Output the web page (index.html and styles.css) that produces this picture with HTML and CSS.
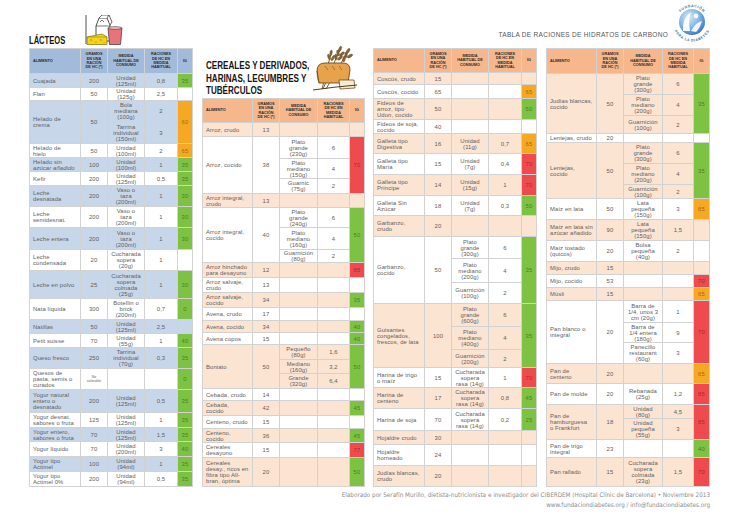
FILE: index.html
```html
<!DOCTYPE html>
<html lang="es">
<head>
<meta charset="utf-8">
<title>Tabla de raciones de hidratos de carbono</title>
<link rel="stylesheet" href="styles.css">
</head>
<body>
<div class="page">
  <div class="cols">
    <section class="col col1">
      <div class="head1">
        <h2 class="sec-title sec-title1">LÁCTEOS</h2>
        <svg class="icon-milk" viewBox="0 0 38 31" aria-hidden="true">
          <line x1="1" y1="0" x2="1" y2="29" stroke="#222" stroke-width="0.8"/>
          <path d="M11 11 L14 3 L22 3 L25 10 L25 26 L11 26 Z" fill="#fff" stroke="#222" stroke-width="0.8"/>
          <path d="M14 3 L17 0 L24 0 L22 3" fill="#fff" stroke="#222" stroke-width="0.7"/>
          <path d="M24 0 L27 7 L25 10" fill="#fff" stroke="#222" stroke-width="0.7"/>
          <line x1="11" y1="11" x2="25" y2="11" stroke="#222" stroke-width="0.6"/>
          <path d="M15 7 L17 5 L19 7" fill="none" stroke="#222" stroke-width="0.6"/>
          <path d="M23 13 L37 13 L35.5 29.5 L24.5 29.5 Z" fill="#e8747b" stroke="#333" stroke-width="0.7"/>
          <ellipse cx="30" cy="13" rx="7" ry="1.4" fill="#f4b3b6" stroke="#333" stroke-width="0.5"/>
          <path d="M2 22 L17 19 L22 22 L22 29.5 L2 29.5 Z" fill="#f3d31b" stroke="#6b5a00" stroke-width="0.6"/>
          <path d="M2 22 L22 22" stroke="#6b5a00" stroke-width="0.4"/>
          <circle cx="6" cy="25" r="1" fill="#c9a800"/>
          <circle cx="11" cy="27" r="0.8" fill="#c9a800"/>
          <circle cx="16" cy="25" r="1" fill="#c9a800"/>
          <circle cx="19" cy="27.5" r="0.7" fill="#c9a800"/>
        </svg>
      </div>
      <table class="tbl blue">
        <colgroup><col class="ca"><col class="cg"><col class="cm"><col class="cr"><col class="ci"></colgroup>
        <thead>
          <tr class="h25"><th class="n">ALIMENTO</th><th>GRAMOS<br>EN UNA<br>RACIÓN<br>DE HC (*)</th><th>MEDIDA<br>HABITUAL DE<br>CONSUMO</th><th>RACIONES<br>DE HC EN<br>MEDIDA<br>HABITUAL</th><th>IG</th></tr>
        </thead>
        <tbody>
          <tr class="a h14"><td class="n">Cuajada</td><td>200</td><td>Unidad<br>(125ml)</td><td>0,8</td><td class="g">35</td></tr>
          <tr class="h13"><td class="n">Flan</td><td>50</td><td>Unidad<br>(125g)</td><td>2,5</td><td></td></tr>
          <tr class="a h21"><td class="n" rowspan="2">Helado de<br>crema</td><td rowspan="2">50</td><td>Bola<br>mediana<br>(100g)</td><td>2</td><td class="o" rowspan="2">60</td></tr>
          <tr class="a h22"><td>Tarrina<br>individual<br>(150ml)</td><td>3</td></tr>
          <tr class="h14"><td class="n">Helado de<br>hielo</td><td>50</td><td>Unidad<br>(100ml)</td><td>2</td><td class="o">65</td></tr>
          <tr class="a h14"><td class="n">Helado sin<br><i>azúcar añadido</i></td><td>100</td><td>Unidad<br>(100ml)</td><td>1</td><td class="g">35</td></tr>
          <tr class="h14"><td class="n">Kefir</td><td>200</td><td>Unidad<br>(125ml)</td><td>0,5</td><td class="g">35</td></tr>
          <tr class="a h21"><td class="n">Leche<br>desnatada</td><td>200</td><td>Vaso o<br>taza<br>(200ml)</td><td>1</td><td class="g">30</td></tr>
          <tr class="h21"><td class="n">Leche<br>semidesnat.</td><td>200</td><td>Vaso o<br>taza<br>(200ml)</td><td>1</td><td class="g">30</td></tr>
          <tr class="a h22"><td class="n">Leche entera</td><td>200</td><td>Vaso o<br>taza<br>(200ml)</td><td>1</td><td class="g">30</td></tr>
          <tr class="h21"><td class="n">Leche<br>condensada</td><td>20</td><td>Cucharada<br>sopera<br>(20g)</td><td>1</td><td></td></tr>
          <tr class="a h28"><td class="n">Leche en polvo</td><td>25</td><td>Cucharada<br>sopera<br>colmada<br>(25g)</td><td>1</td><td class="g">30</td></tr>
          <tr class="h21"><td class="n">Nata líquida</td><td>300</td><td>Botellín o<br>brick<br>(200ml)</td><td>0,7</td><td class="g">0</td></tr>
          <tr class="a h14"><td class="n">Natillas</td><td>50</td><td>Unidad<br>(125ml)</td><td>2,5</td><td></td></tr>
          <tr class="h14"><td class="n">Petit suisse</td><td>70</td><td>Unidad<br>(55g)</td><td>1</td><td class="g">40</td></tr>
          <tr class="a h21"><td class="n">Queso fresco</td><td>250</td><td>Tarrina<br>individual<br>(70g)</td><td>0,3</td><td class="g">35</td></tr>
          <tr class="h21"><td class="n">Quesos de<br>pasta, semis o<br>curados</td><td class="tiny">No<br>valorable</td><td></td><td></td><td class="g">0</td></tr>
          <tr class="a h23"><td class="n">Yogur natural<br>entero o<br>desnatado</td><td>200</td><td>Unidad<br>(125ml)</td><td>0,5</td><td class="g">35</td></tr>
          <tr class="h15"><td class="n">Yogur desnat.<br>sabores o fruta</td><td>125</td><td>Unidad<br>(125ml)</td><td>1</td><td class="g">35</td></tr>
          <tr class="a h14"><td class="n">Yogur entero,<br>sabores o fruta</td><td>70</td><td>Unidad<br>(125ml)</td><td>1,5</td><td class="g">35</td></tr>
          <tr class="h15"><td class="n">Yogur líquido</td><td>70</td><td>Unidad<br>(200ml)</td><td>3</td><td class="g">40</td></tr>
          <tr class="a h15"><td class="n">Yogur tipo<br>Actimel</td><td>100</td><td>Unidad<br>(94ml)</td><td>1</td><td class="g">35</td></tr>
          <tr class="h15"><td class="n">Yogur tipo<br>Actimel 0%</td><td>200</td><td>Unidad<br>(94ml)</td><td>0,5</td><td class="g">35</td></tr>
        </tbody>
      </table>
    </section>

    <section class="col col2">
      <div class="head2">
        <h2 class="sec-title sec-title2">CEREALES Y DERIVADOS,<br>HARINAS, LEGUMBRES Y<br>TUBÉRCULOS</h2>
        <svg class="icon-bread" viewBox="0 0 45 50" aria-hidden="true">
          <g stroke="#6e4d22" stroke-width="0.9" fill="none">
            <path d="M10 46 L27 6"/>
            <path d="M13 46 L35 8"/>
            <path d="M9 46 L18 10"/>
          </g>
          <g fill="#8a6432" stroke="#4a3010" stroke-width="0.3">
            <ellipse cx="27" cy="6" rx="1.3" ry="3" transform="rotate(25 27 6)"/>
            <ellipse cx="25" cy="10" rx="1.3" ry="3" transform="rotate(-10 25 10)"/>
            <ellipse cx="29" cy="11" rx="1.3" ry="3" transform="rotate(50 29 11)"/>
            <ellipse cx="23" cy="14" rx="1.3" ry="3" transform="rotate(-5 23 14)"/>
            <ellipse cx="27" cy="15" rx="1.3" ry="3" transform="rotate(50 27 15)"/>
            <ellipse cx="35" cy="8" rx="1.3" ry="3" transform="rotate(35 35 8)"/>
            <ellipse cx="33" cy="12" rx="1.3" ry="3" transform="rotate(5 33 12)"/>
            <ellipse cx="37" cy="13" rx="1.3" ry="3" transform="rotate(60 37 13)"/>
            <ellipse cx="31" cy="16" rx="1.3" ry="3" transform="rotate(10 31 16)"/>
            <ellipse cx="18" cy="10" rx="1.2" ry="3" transform="rotate(10 18 10)"/>
            <ellipse cx="16" cy="14" rx="1.2" ry="3" transform="rotate(-20 16 14)"/>
            <ellipse cx="20" cy="15" rx="1.2" ry="3" transform="rotate(30 20 15)"/>
          </g>
          <path d="M4 28 Q4 20 12 20 L30 20 Q37 20 37 27 L35 40 L6 40 Z" fill="#e9a24c" stroke="#5a3a10" stroke-width="0.8"/>
          <path d="M4 28 Q4 36 6 40" fill="none" stroke="#5a3a10" stroke-width="0.6"/>
          <g stroke="#8a5a20" stroke-width="0.7">
            <line x1="12" y1="23" x2="15" y2="27"/>
            <line x1="19" y1="23" x2="22" y2="27"/>
            <line x1="26" y1="23" x2="29" y2="27"/>
          </g>
          <path d="M26 37 L41 37 L42 45 L27 46 Z" fill="#f8ecd0" stroke="#5a3a10" stroke-width="0.7"/>
          <path d="M0 47 Q20 44 44 42" fill="none" stroke="#3a2a10" stroke-width="0.9"/>
        </svg>
      </div>
      <table class="tbl peach">
        <colgroup><col class="ca2"><col class="cg"><col class="cm2"><col class="cr2"><col class="ci"></colgroup>
        <thead>
          <tr class="h24"><th class="n">ALIMENTO</th><th>GRAMOS<br>EN UNA<br>RACIÓN<br>DE HC (*)</th><th>MEDIDA<br>HABITUAL DE<br>CONSUMO</th><th>RACIONES<br>DE HC EN<br>MEDIDA<br>HABITUAL</th><th>IG</th></tr>
        </thead>
        <tbody>
          <tr class="a h14"><td class="n">Arroz, crudo</td><td>13</td><td></td><td></td><td></td></tr>
          <tr class="h22"><td class="n" rowspan="3">Arroz, cocido</td><td rowspan="3">38</td><td>Plato<br>grande<br>(230g)</td><td>6</td><td class="r" rowspan="3">70</td></tr>
          <tr class="h20"><td>Plato<br>mediano<br>(150g)</td><td>4</td></tr>
          <tr class="h15"><td>Guarnic<br>(75g)</td><td>2</td></tr>
          <tr class="a h14"><td class="n">Arroz integral,<br>crudo</td><td>13</td><td></td><td></td><td></td></tr>
          <tr class="h20"><td class="n" rowspan="3">Arroz integral,<br>cocido</td><td rowspan="3">40</td><td>Plato<br>grande<br>(240g)</td><td>6</td><td class="g" rowspan="3">50</td></tr>
          <tr class="h22"><td>Plato<br>mediano<br>(160g)</td><td>4</td></tr>
          <tr class="h13"><td>Guarnición<br>(80g)</td><td>2</td></tr>
          <tr class="a h15"><td class="n">Arroz hinchado<br>para desayuno</td><td>12</td><td></td><td></td><td class="r">85</td></tr>
          <tr class="h15"><td class="n">Arroz salvaje,<br>crudo</td><td>13</td><td></td><td></td><td></td></tr>
          <tr class="a h15"><td class="n">Arroz salvaje,<br>cocido</td><td>34</td><td></td><td></td><td class="g">35</td></tr>
          <tr class="h13"><td class="n">Avena, crudo</td><td>17</td><td></td><td></td><td></td></tr>
          <tr class="a h12"><td class="n">Avena, cocido</td><td>34</td><td></td><td></td><td class="g">40</td></tr>
          <tr class="h12"><td class="n">Avena copos</td><td>15</td><td></td><td></td><td class="g">40</td></tr>
          <tr class="a h15"><td class="n" rowspan="3">Boniato</td><td rowspan="3">50</td><td>Pequeño<br>(80g)</td><td>1,6</td><td class="g" rowspan="3">50</td></tr>
          <tr class="a h14"><td>Mediano<br>(160g)</td><td>3,2</td></tr>
          <tr class="a h15"><td>Grande<br>(320g)</td><td>6,4</td></tr>
          <tr class="h12"><td class="n">Cebada, crudo</td><td>14</td><td></td><td></td><td></td></tr>
          <tr class="a h15"><td class="n">Cebada,<br>cocido</td><td>42</td><td></td><td></td><td class="g">45</td></tr>
          <tr class="h13"><td class="n">Centeno, crudo</td><td>15</td><td></td><td></td><td></td></tr>
          <tr class="a h14"><td class="n">Centeno,<br>cocido</td><td>36</td><td></td><td></td><td class="g">45</td></tr>
          <tr class="h15"><td class="n">Cereales<br>desayuno</td><td>15</td><td></td><td></td><td class="r">77</td></tr>
          <tr class="a h29"><td class="n">Cereales<br>desay., ricos en<br>fibra tipo All-<br>bran, óptima</td><td>20</td><td></td><td></td><td class="g">50</td></tr>
        </tbody>
      </table>
    </section>

    <section class="group">
      <div class="group-head">
        <h1 class="main-title">TABLA DE RACIONES DE HIDRATOS DE CARBONO</h1>
        <svg class="logo" viewBox="0 0 46 46" aria-label="Fundación para la Diabetes">
          <defs>
            <radialGradient id="lg" cx="38%" cy="32%" r="75%">
              <stop offset="0" stop-color="#d6ebfa"/>
              <stop offset="0.55" stop-color="#7fb4e2"/>
              <stop offset="1" stop-color="#2f74bd"/>
            </radialGradient>
            <path id="arcTop" d="M8 22 A15 15 0 0 1 38 22"/>
            <path id="arcBot" d="M3.5 22 A19.5 19.5 0 0 0 42.5 22"/>
          </defs>
          <circle cx="23" cy="22" r="13" fill="url(#lg)"/>
          <path d="M14 31 Q13 18 22 12 Q19 21 21 31 Z" fill="#fff" opacity="0.95"/>
          <path d="M22 31 Q27 22 33 21 Q31 28 27 32 Z" fill="#fff" opacity="0.9"/>
          <circle cx="27" cy="16" r="2.4" fill="#fff" opacity="0.9"/>
          <text class="logo-t"><textPath href="#arcTop" startOffset="50%" text-anchor="middle">FUNDACIÓN</textPath></text>
          <text class="logo-t"><textPath href="#arcBot" startOffset="50%" text-anchor="middle">PARA LA DIABETES</textPath></text>
        </svg>
      </div>
      <div class="group-tables">
        <table class="tbl peach">
          <colgroup><col class="ca"><col class="cg"><col class="cm"><col class="cr"><col class="ci"></colgroup>
          <thead>
            <tr class="h24"><th class="n">ALIMENTO</th><th>GRAMOS<br>EN UNA<br>RACIÓN<br>DE HC (*)</th><th>MEDIDA<br>HABITUAL DE<br>CONSUMO</th><th>RACIONES<br>DE HC EN<br>MEDIDA<br>HABITUAL</th><th>IG</th></tr>
          </thead>
          <tbody>
            <tr class="a h12"><td class="n">Cuscús, crudo</td><td>15</td><td></td><td></td><td></td></tr>
            <tr class="h14"><td class="n">Cuscús, cocido</td><td>65</td><td></td><td></td><td class="o">65</td></tr>
            <tr class="a h21"><td class="n">Fideos de<br>arroz, tipo<br>Udon, cocido</td><td>50</td><td></td><td></td><td class="g">50</td></tr>
            <tr class="h14"><td class="n">Fideos de soja,<br>cocido</td><td>40</td><td></td><td></td><td></td></tr>
            <tr class="a h20"><td class="n">Galleta tipo<br>Digestiva</td><td>16</td><td>Unidad<br>(11g)</td><td>0,7</td><td class="o">65</td></tr>
            <tr class="h21"><td class="n">Galleta tipo<br>María</td><td>15</td><td>Unidad<br>(7g)</td><td>0,4</td><td class="r">70</td></tr>
            <tr class="a h21"><td class="n">Galleta tipo<br>Príncipe</td><td>14</td><td>Unidad<br>(15g)</td><td>1</td><td class="r">70</td></tr>
            <tr class="h20"><td class="n">Galleta Sin<br>Azúcar</td><td>18</td><td>Unidad<br>(7g)</td><td>0,3</td><td class="g">50</td></tr>
            <tr class="a h21"><td class="n">Garbanzo,<br>crudo</td><td>20</td><td></td><td></td><td></td></tr>
            <tr class="h22"><td class="n" rowspan="3">Garbanzo,<br>cocido</td><td rowspan="3">50</td><td>Plato<br>grande<br>(300g)</td><td>6</td><td class="g" rowspan="3">35</td></tr>
            <tr class="h24"><td>Plato<br>mediano<br>(200g)</td><td>4</td></tr>
            <tr class="h21"><td>Guarnición<br>(100g)</td><td>2</td></tr>
            <tr class="a h23"><td class="n" rowspan="3">Guisantes<br>congelados,<br>frescos, de lata</td><td rowspan="3">100</td><td>Plato<br>grande<br>(600g)</td><td>6</td><td class="g" rowspan="3">35</td></tr>
            <tr class="a h23"><td>Plato<br>mediano<br>(400g)</td><td>4</td></tr>
            <tr class="a h18"><td>Guarnición<br>(200g)</td><td>2</td></tr>
            <tr class="h20"><td class="n">Harina de trigo<br>o maíz</td><td>15</td><td>Cucharada<br>sopera<br>rasa (14g)</td><td>1</td><td class="r">70</td></tr>
            <tr class="a h21"><td class="n">Harina de<br>centeno</td><td>17</td><td>Cucharada<br>sopera<br>rasa (14g)</td><td>0,8</td><td class="g">45</td></tr>
            <tr class="h22"><td class="n">Harina de soja</td><td>70</td><td>Cucharada<br>sopera<br>rasa (14g)</td><td>0,2</td><td class="g">25</td></tr>
            <tr class="a h14"><td class="n">Hojaldre crudo</td><td>30</td><td></td><td></td><td></td></tr>
            <tr class="h21"><td class="n">Hojaldre<br>horneado</td><td>24</td><td></td><td></td><td></td></tr>
            <tr class="a h21"><td class="n">Judías blancas,<br>crudo</td><td>20</td><td></td><td></td><td></td></tr>
          </tbody>
        </table>

        <table class="tbl peach">
          <colgroup><col class="ca2"><col class="cg"><col class="cm3"><col class="cr3"><col class="ci3"></colgroup>
          <thead>
            <tr class="h25"><th class="n">ALIMENTO</th><th>GRAMOS<br>EN UNA<br>RACIÓN<br>DE HC (*)</th><th>MEDIDA<br>HABITUAL DE<br>CONSUMO</th><th>RACIONES<br>DE HC EN<br>MEDIDA<br>HABITUAL</th><th>IG</th></tr>
          </thead>
          <tbody>
            <tr class="a h21"><td class="n" rowspan="3">Judías blancas,<br>cocido</td><td rowspan="3">50</td><td>Plato<br>grande<br>(300g)</td><td>6</td><td class="g" rowspan="3">35</td></tr>
            <tr class="a h21"><td>Plato<br>mediano<br>(200g)</td><td>4</td></tr>
            <tr class="a h18"><td>Guarnición<br>(100g)</td><td>2</td></tr>
            <tr class="h9"><td class="n">Lentejas, crudo</td><td>20</td><td></td><td></td><td></td></tr>
            <tr class="a h21"><td class="n" rowspan="3">Lentejas,<br>cocido</td><td rowspan="3">50</td><td>Plato<br>grande<br>(300g)</td><td>6</td><td class="g" rowspan="3">35</td></tr>
            <tr class="a h21"><td>Plato<br>mediano<br>(200g)</td><td>4</td></tr>
            <tr class="a h14"><td>Guarnición<br>(100g)</td><td>2</td></tr>
            <tr class="h21"><td class="n">Maíz en lata</td><td>50</td><td>Lata<br>pequeña<br>(150g)</td><td>3</td><td class="o">65</td></tr>
            <tr class="a h21"><td class="n">Maíz en lata sin<br>azúcar añadido</td><td>90</td><td>Lata<br>pequeña<br>(150g)</td><td>1,5</td><td></td></tr>
            <tr class="h21"><td class="n">Maíz tostado<br>(quicos)</td><td>20</td><td>Bolsa<br>pequeña<br>(40g)</td><td>2</td><td></td></tr>
            <tr class="a h13"><td class="n">Mijo, crudo</td><td>15</td><td></td><td></td><td></td></tr>
            <tr class="h13"><td class="n">Mijo, cocido</td><td>53</td><td></td><td></td><td class="r">70</td></tr>
            <tr class="a h13"><td class="n">Müsli</td><td>15</td><td></td><td></td><td class="o">65</td></tr>
            <tr class="h22"><td class="n" rowspan="3">Pan blanco o<br>integral</td><td rowspan="3">20</td><td>Barra de<br>1/4, unos 3<br>cm (20g)</td><td>1</td><td class="r" rowspan="3">70</td></tr>
            <tr class="h20"><td>Barra de<br>1/4 entera<br>(180g)</td><td>9</td></tr>
            <tr class="h21"><td>Panecillo<br>restaurant<br>(60g)</td><td>3</td></tr>
            <tr class="a h20"><td class="n">Pan de<br>centeno</td><td>20</td><td></td><td></td><td class="o">65</td></tr>
            <tr class="h21"><td class="n">Pan de molde</td><td>20</td><td>Rebanada<br>(25g)</td><td>1,2</td><td class="r">85</td></tr>
            <tr class="a h14"><td class="n" rowspan="2">Pan de<br>hamburguesa<br>o Frankfurt</td><td rowspan="2">18</td><td>Unidad<br>(80g)</td><td>4,5</td><td class="r" rowspan="2">85</td></tr>
            <tr class="a h21"><td>Unidad<br>pequeña<br>(55g)</td><td>3</td></tr>
            <tr class="h18"><td class="n">Pan de trigo<br>integral</td><td>23</td><td></td><td></td><td class="g">40</td></tr>
            <tr class="a h29"><td class="n">Pan rallado</td><td>15</td><td>Cucharada<br>sopera<br>colmada<br>(23g)</td><td>1,5</td><td class="r">70</td></tr>
          </tbody>
        </table>
      </div>
    </section>
  </div>
  <footer class="foot">
    <p>Elaborado por Serafín Murillo, dietista-nutricionista e investigador del CIBERDEM (Hospital Clínic de Barcelona) • Noviembre 2013</p>
    <p>www.fundaciondiabetes.org / info@fundaciondiabetes.org</p>
  </footer>
</div>
</body>
</html>
```

FILE: styles.css
```css
* { box-sizing: border-box; }

body {
  margin: 0;
  background: #fff;
  font-family: "Liberation Sans", Arial, sans-serif;
}

.page {
  width: 736px;
  height: 516px;
  overflow: hidden;
  padding-left: 29px;
}

.cols {
  display: flex;
  align-items: flex-start;
  height: 486px;
}

.col1 { width: 163px; margin-right: 10px; }
.col2 { width: 162px; margin-right: 9px; }
.group { width: 335px; }

.head1 {
  height: 48px;
  display: flex;
  align-items: flex-start;
}

/* section headings: condensed bold caps */
.sec-title {
  flex: none;
  margin: 0;
  font-family: "Liberation Sans", Arial, sans-serif;
  font-weight: bold;
  color: #151515;
  white-space: nowrap;
  transform-origin: left top;
}

.sec-title1 {
  width: 36px;
  margin-top: 35px;
  font-size: 11px;
  line-height: 11px;
  transform: scaleX(0.69);
}

.icon-milk {
  width: 38px;
  height: 31px;
  margin: 15px 0 0 20px;
}

.head2 {
  height: 98px;
  display: flex;
  align-items: flex-start;
  padding-left: 4px;
}

.sec-title2 {
  width: 105px;
  margin-top: 59px;
  font-size: 10.5px;
  line-height: 12.7px;
  transform: scaleX(0.77);
}

.icon-bread {
  width: 45px;
  height: 50px;
  margin: 43px 6px 0 auto;
}

.group-head {
  height: 48px;
  display: flex;
  justify-content: flex-end;
  align-items: flex-start;
}

.main-title {
  margin: 31px 0 0;
  font-weight: normal;
  font-size: 6.5px;
  line-height: 7px;
  letter-spacing: 0.3px;
  color: #555;
  white-space: nowrap;
}

.logo {
  width: 46px;
  height: 46px;
  margin: 0 -7px 0 1px;
}

.logo-t {
  font-family: "Liberation Sans", Arial, sans-serif;
  font-size: 3.6px;
  font-weight: bold;
  letter-spacing: 0.5px;
  fill: #3b6fa6;
}

.group-tables {
  display: flex;
  gap: 9px;
}

/* tables */
.tbl {
  border-collapse: collapse;
  table-layout: fixed;
  width: 163px;
}

.ca { width: 51px; }
.ca2 { width: 50px; }
.cg { width: 27px; }
.cm { width: 37px; }
.cm2 { width: 38px; }
.cm3 { width: 39px; }
.cr { width: 33px; }
.cr2 { width: 32px; }
.cr3 { width: 31px; }
.ci { width: 15px; }
.ci3 { width: 16px; }

.tbl th,
.tbl td {
  border: 1px solid #d2d2d2;
  padding: 0 1px;
  text-align: center;
  vertical-align: middle;
  white-space: nowrap;
  overflow: hidden;
}

.tbl td {
  font-size: 5.9px;
  line-height: 6px;
  color: #5e5e5e;
  letter-spacing: 0.1px;
}

.tbl th {
  font-size: 3.8px;
  line-height: 4.4px;
  font-weight: bold;
  color: #2b2b2b;
}

.tbl .n {
  text-align: left;
  padding-left: 3px;
}

.tbl td.tiny {
  font-size: 3.4px;
  line-height: 4px;
}

.blue th { background: #a3bbdb; }
.blue tr.a td { background: #c8d6ea; }

.peach th { background: #f7b78c; }
.peach tr.a td { background: #fce4d3; }

.tbl tr td.g { background: #7dc242; color: rgba(30, 60, 0, 0.55); }
.tbl tr td.o { background: #f6a823; color: rgba(90, 40, 0, 0.55); }
.tbl tr td.r { background: #ef4b4f; color: rgba(90, 0, 0, 0.5); }

.h9 { height: 9px; }
.h12 { height: 12px; }
.h13 { height: 13px; }
.h14 { height: 14px; }
.h15 { height: 15px; }
.h18 { height: 18px; }
.h20 { height: 20px; }
.h21 { height: 21px; }
.h22 { height: 22px; }
.h23 { height: 23px; }
.h24 { height: 24px; }
.h25 { height: 25px; }
.h28 { height: 28px; }
.h29 { height: 29px; }

/* footer */
.foot {
  margin-top: 4px;
  padding-right: 26px;
  text-align: right;
  font-family: "Liberation Sans Narrow", "DejaVu Sans Condensed", sans-serif;
  font-size: 6.3px;
  line-height: 10px;
  color: #8c8c8c;
}

.foot p { margin: 0; }
```
